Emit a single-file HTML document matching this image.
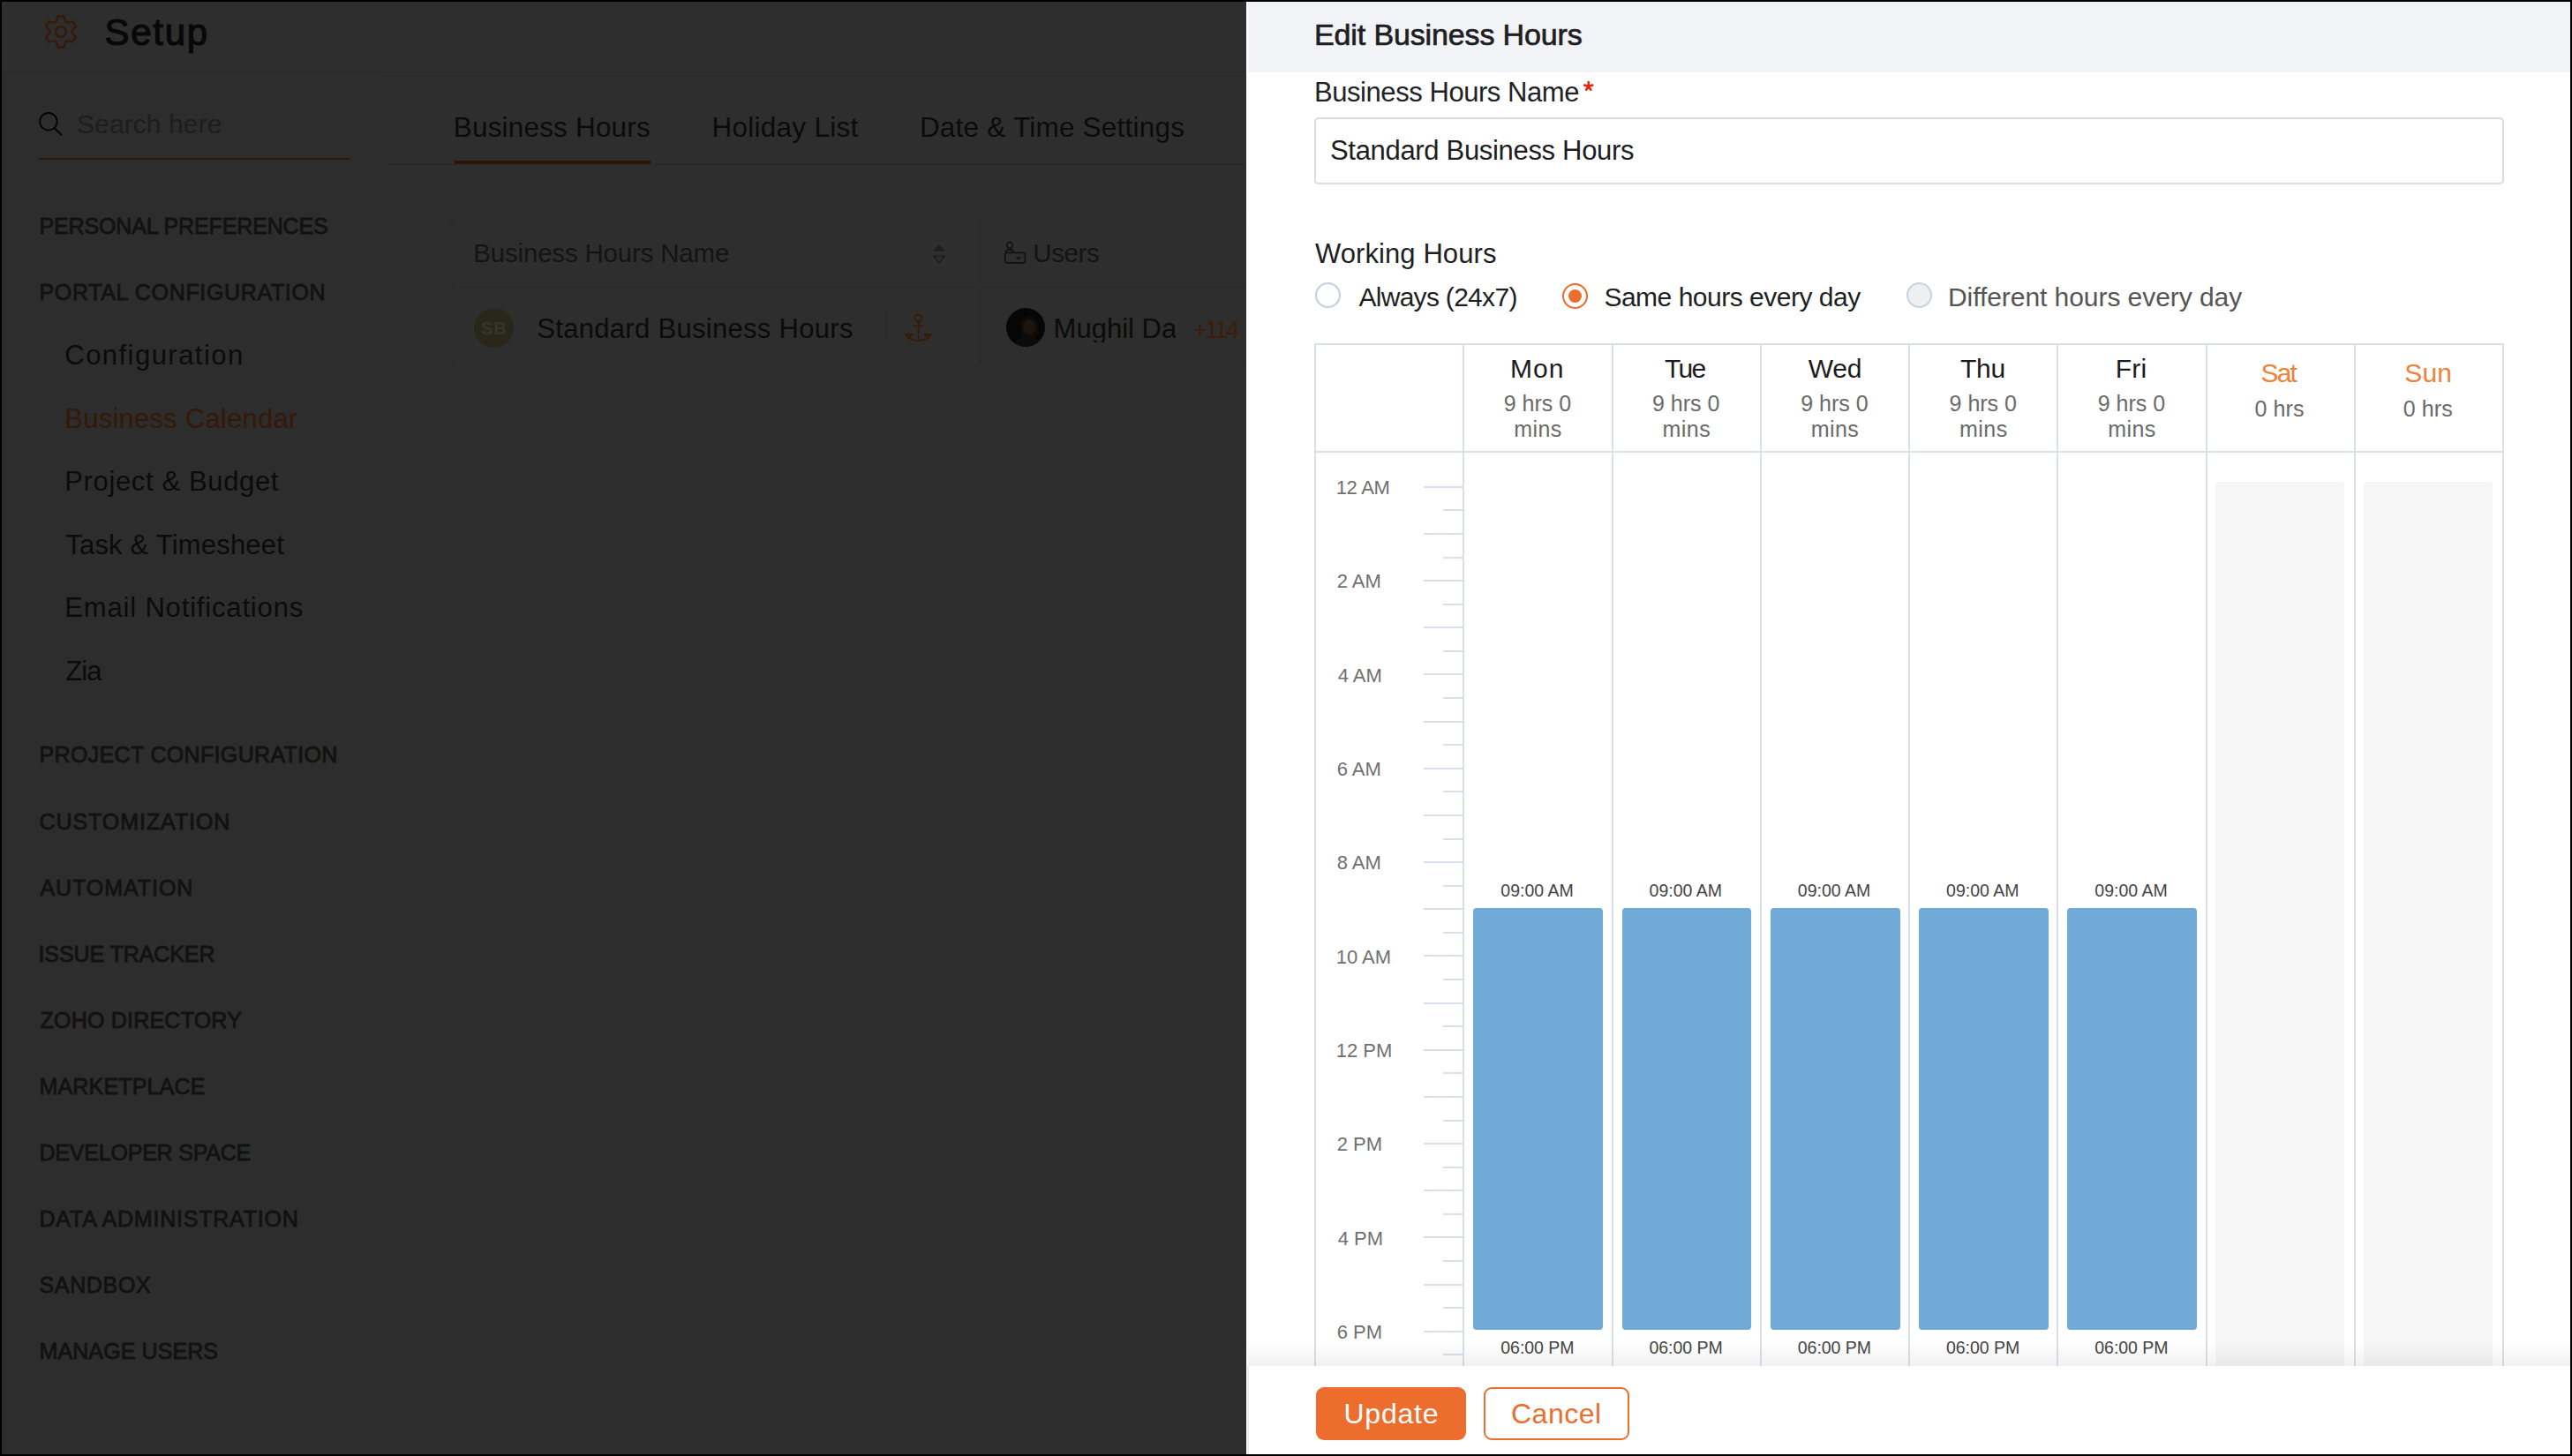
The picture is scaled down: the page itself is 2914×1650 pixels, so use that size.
<!DOCTYPE html>
<html><head><meta charset="utf-8"><title>Edit Business Hours</title>
<style>
html,body{margin:0;padding:0;}
body{width:2914px;height:1650px;background:#000;position:relative;overflow:hidden;font-family:"Liberation Sans", sans-serif;}
.t{position:absolute;white-space:nowrap;}
.r{position:absolute;}
</style></head><body>
<div class="r" style="left:2.0px;top:2.0px;width:1410.0px;height:1646.0px;background:#2e2e2e;"></div>
<div class="r" style="left:2.0px;top:82.0px;width:437.0px;height:1566.0px;background:#2d2d2d;"></div>
<div class="r" style="left:2.0px;top:81.0px;width:1410.0px;height:1.0px;background:#2a2a2a;"></div>
<svg class="r" style="left:46.6px;top:13.6px" width="44" height="44" viewBox="0 0 24 24"><path fill="none" stroke="#371806" stroke-width="1.25" stroke-linejoin="round" d="M9.19 5.70 L10.14 2.43 L13.86 2.43 L14.81 5.70 L16.06 6.42 L19.36 5.60 L21.22 8.83 L18.86 11.28 L18.86 12.72 L21.22 15.17 L19.36 18.40 L16.06 17.58 L14.81 18.30 L13.86 21.57 L10.14 21.57 L9.19 18.30 L7.94 17.58 L4.64 18.40 L2.78 15.17 L5.14 12.72 L5.14 11.28 L2.78 8.83 L4.64 5.60 L7.94 6.42Z"/><circle cx="12" cy="12" r="3.2" fill="none" stroke="#371806" stroke-width="1.25"/></svg>
<div class="t" style="left:118.4px;top:16.2px;font-size:42px;line-height:42px;font-weight:400;color:#080808;letter-spacing:1.75px;-webkit-text-stroke:1.2px #080808;">Setup</div>
<svg class="r" style="left:40px;top:124px" width="36" height="36" viewBox="0 0 36 36"><circle cx="14.9" cy="13.8" r="9.8" fill="none" stroke="#040404" stroke-width="1.8"/><path d="M22 21.5l8 7.8" stroke="#040404" stroke-width="1.9" fill="none"/></svg>
<div class="t" style="left:87.0px;top:126.4px;font-size:30px;line-height:30px;font-weight:400;color:#1d1d1d;letter-spacing:0.10px;">Search here</div>
<div class="r" style="left:44.0px;top:179.0px;width:352.0px;height:2.0px;background:#2f1608;"></div>
<div class="t" style="left:44.5px;top:244.0px;font-size:25px;line-height:25px;font-weight:400;color:#121212;letter-spacing:-0.13px;-webkit-text-stroke:0.85px #121212;">PERSONAL PREFERENCES</div>
<div class="t" style="left:44.5px;top:319.3px;font-size:25px;line-height:25px;font-weight:400;color:#121212;letter-spacing:0.66px;-webkit-text-stroke:0.85px #121212;">PORTAL CONFIGURATION</div>
<div class="t" style="left:73.3px;top:387.4px;font-size:31px;line-height:31px;font-weight:400;color:#0b0b0b;letter-spacing:1.46px;">Configuration</div>
<div class="t" style="left:73.3px;top:458.8px;font-size:31px;line-height:31px;font-weight:400;color:#351807;letter-spacing:0.23px;">Business Calendar</div>
<div class="t" style="left:73.3px;top:530.3px;font-size:31px;line-height:31px;font-weight:400;color:#0b0b0b;letter-spacing:0.63px;">Project &amp; Budget</div>
<div class="t" style="left:74.3px;top:601.7px;font-size:31px;line-height:31px;font-weight:400;color:#0b0b0b;letter-spacing:0.19px;">Task &amp; Timesheet</div>
<div class="t" style="left:73.3px;top:673.2px;font-size:31px;line-height:31px;font-weight:400;color:#0b0b0b;letter-spacing:0.83px;">Email Notifications</div>
<div class="t" style="left:74.3px;top:744.6px;font-size:31px;line-height:31px;font-weight:400;color:#0b0b0b;letter-spacing:-0.90px;">Zia</div>
<div class="t" style="left:44.5px;top:843.4px;font-size:25px;line-height:25px;font-weight:400;color:#121212;letter-spacing:0.34px;-webkit-text-stroke:0.85px #121212;">PROJECT CONFIGURATION</div>
<div class="t" style="left:44.5px;top:918.5px;font-size:25px;line-height:25px;font-weight:400;color:#121212;letter-spacing:0.94px;-webkit-text-stroke:0.85px #121212;">CUSTOMIZATION</div>
<div class="t" style="left:45.5px;top:993.6px;font-size:25px;line-height:25px;font-weight:400;color:#121212;letter-spacing:0.94px;-webkit-text-stroke:0.85px #121212;">AUTOMATION</div>
<div class="t" style="left:43.5px;top:1068.7px;font-size:25px;line-height:25px;font-weight:400;color:#121212;letter-spacing:-0.08px;-webkit-text-stroke:0.85px #121212;">ISSUE TRACKER</div>
<div class="t" style="left:45.5px;top:1143.8px;font-size:25px;line-height:25px;font-weight:400;color:#121212;letter-spacing:0.22px;-webkit-text-stroke:0.85px #121212;">ZOHO DIRECTORY</div>
<div class="t" style="left:44.5px;top:1218.9px;font-size:25px;line-height:25px;font-weight:400;color:#121212;letter-spacing:0.17px;-webkit-text-stroke:0.85px #121212;">MARKETPLACE</div>
<div class="t" style="left:44.5px;top:1294.0px;font-size:25px;line-height:25px;font-weight:400;color:#121212;letter-spacing:-0.21px;-webkit-text-stroke:0.85px #121212;">DEVELOPER SPACE</div>
<div class="t" style="left:44.5px;top:1369.1px;font-size:25px;line-height:25px;font-weight:400;color:#121212;letter-spacing:0.78px;-webkit-text-stroke:0.85px #121212;">DATA ADMINISTRATION</div>
<div class="t" style="left:44.5px;top:1444.2px;font-size:25px;line-height:25px;font-weight:400;color:#121212;letter-spacing:0.65px;-webkit-text-stroke:0.85px #121212;">SANDBOX</div>
<div class="t" style="left:44.5px;top:1519.3px;font-size:25px;line-height:25px;font-weight:400;color:#121212;letter-spacing:0.10px;-webkit-text-stroke:0.85px #121212;">MANAGE USERS</div>
<div class="r" style="left:440.0px;top:185.0px;width:972.0px;height:2.0px;background:#2a2a2a;"></div>
<div class="t" style="left:513.8px;top:129.4px;font-size:31.5px;line-height:31.5px;font-weight:400;color:#0b0b0b;letter-spacing:0.18px;">Business Hours</div>
<div class="r" style="left:515.0px;top:182.0px;width:222.0px;height:4.0px;background:#2e1405;"></div>
<div class="t" style="left:806.4px;top:129.4px;font-size:31.5px;line-height:31.5px;font-weight:400;color:#0b0b0b;letter-spacing:0.28px;">Holiday List</div>
<div class="t" style="left:1041.9px;top:129.4px;font-size:31.5px;line-height:31.5px;font-weight:400;color:#0b0b0b;letter-spacing:0.22px;">Date &amp; Time Settings</div>
<div class="r" style="left:511.0px;top:247.0px;width:929.0px;height:168.0px;background:#2e2e2e;border:2px solid #2a2b2c;border-radius:8px;box-sizing:border-box;"></div>
<div class="r" style="left:513.0px;top:324.0px;width:899.0px;height:2.0px;background:#2a2b2c;"></div>
<div class="r" style="left:1109.0px;top:249.0px;width:2.0px;height:164.0px;background:#2a2b2c;"></div>
<div class="t" style="left:536.3px;top:272.2px;font-size:29.5px;line-height:29.5px;font-weight:400;color:#141414;letter-spacing:-0.19px;">Business Hours Name</div>
<svg class="r" style="left:1054px;top:274px" width="20" height="28" viewBox="0 0 20 28"><path d="M10 3l6.5 8h-13z" fill="#1e1e1e"/><path d="M3.5 16h13L10 24z" fill="none" stroke="#1e1e1e" stroke-width="1.6" stroke-linejoin="round"/></svg>
<svg class="r" style="left:1130px;top:270px" width="36" height="34" viewBox="0 0 36 34"><ellipse cx="14" cy="8" rx="3.2" ry="3.6" fill="none" stroke="#111" stroke-width="1.6"/><path d="M9.3 16.2a4.8 4.2 0 0 1 9.4 0" fill="none" stroke="#111" stroke-width="1.6"/><rect x="8.8" y="16.4" width="22.6" height="11.4" rx="2.2" fill="none" stroke="#111" stroke-width="1.7"/><path d="M21.4 20.8l2.5 2.5 2.5-2.5" fill="none" stroke="#111" stroke-width="1.6"/></svg>
<div class="t" style="left:1170.3px;top:272.2px;font-size:29.5px;line-height:29.5px;font-weight:400;color:#141414;letter-spacing:-0.40px;">Users</div>
<div class="r" style="left:537px;top:348.5px;width:45px;height:45px;border-radius:50%;background:#29271a;"></div>
<div class="t" style="left:545.0px;top:362.0px;font-size:20px;line-height:20px;font-weight:700;color:#36352c;letter-spacing:1.00px;">SB</div>
<div class="t" style="left:608.3px;top:357.0px;font-size:31px;line-height:31px;font-weight:400;color:#0b0b0b;letter-spacing:0.30px;">Standard Business Hours</div>
<div class="r" style="left:1003.0px;top:351.0px;width:2.0px;height:40.0px;background:#2a2b2c;"></div>
<svg class="r" style="left:1020px;top:350px" width="42" height="42" viewBox="0 0 42 42"><circle cx="20.4" cy="10.5" r="3.9" fill="none" stroke="#381906" stroke-width="1.7"/><path d="M20.4 14.4v21.4M15.2 19.4h10.6M6.2 29.2c2.6 4.6 8 6.8 14.2 6.8s11.6-2.2 14.2-6.8" fill="none" stroke="#381906" stroke-width="1.7"/><path d="M5.6 28.9h8.2l-4 3.6zM35.2 28.9h-8.2l4 3.6z" fill="none" stroke="#381906" stroke-width="1.6" stroke-linejoin="round"/></svg>
<div class="r" style="left:1140px;top:348.5px;width:44px;height:44px;border-radius:50%;background:#060606;overflow:hidden"><div style="position:absolute;left:17px;top:9px;width:19px;height:28px;border-radius:45%;background:#0e0c0a"></div><div style="position:absolute;left:19px;top:13px;width:14px;height:17px;border-radius:50%;background:#1c140e"></div><div style="position:absolute;left:10px;top:33px;width:30px;height:16px;border-radius:50%;background:#0b0b0b"></div></div>
<div class="t" style="left:1193.6px;top:357.0px;font-size:31px;line-height:31px;font-weight:400;color:#0b0b0b;width:138.4px;overflow:hidden;">Mughil Das</div>
<div class="t" style="left:1351.6px;top:361.0px;font-size:27px;line-height:27px;font-weight:400;color:#3d1c08;letter-spacing:-2.13px;">+114</div>
<div class="r" style="left:1412.0px;top:2.0px;width:1500.0px;height:1646.0px;background:#ffffff;"></div>
<div class="r" style="left:1414.0px;top:2.0px;width:1498.0px;height:80.0px;background:#f2f3f7;"></div>
<div class="t" style="left:1489.0px;top:21.5px;font-size:34px;line-height:34px;font-weight:400;color:#1e1f22;letter-spacing:-0.13px;-webkit-text-stroke:0.7px #1e1f22;">Edit Business Hours</div>
<div class="t" style="left:1489.0px;top:89.0px;font-size:31px;line-height:31px;font-weight:400;color:#212226;letter-spacing:-0.44px;">Business Hours Name</div>
<svg class="r" style="left:1790px;top:88.4px" width="20" height="20" viewBox="0 0 20 20"><g transform="translate(9.7 9.8)" stroke="#e8260f" stroke-width="2.5" stroke-linecap="round" fill="none"><path d="M0 0V-4.8M0 0L4.6-1.3M0 0L2.6 4M0 0L-2.6 4M0 0L-4.6-1.3"/></g></svg>
<div class="r" style="left:1489px;top:133px;width:1348px;height:76px;border:2px solid #d6dde8;border-radius:5px;box-sizing:border-box;background:#fff"></div>
<div class="t" style="left:1507.0px;top:155.2px;font-size:31px;line-height:31px;font-weight:400;color:#1d1d1f;letter-spacing:-0.32px;">Standard Business Hours</div>
<div class="t" style="left:1490.0px;top:272.0px;font-size:31px;line-height:31px;font-weight:400;color:#1e1f22;letter-spacing:0.08px;">Working Hours</div>
<div class="r" style="left:1490.0px;top:320.2px;width:29px;height:29px;border:2.5px solid #c4cfdd;border-radius:50%;box-sizing:border-box;background:#fff"></div>
<div class="t" style="left:1539.4px;top:321.6px;font-size:30px;line-height:30px;font-weight:400;color:#1e1f22;letter-spacing:-0.70px;">Always (24x7)</div>
<div class="r" style="left:1769.5px;top:320.5px;width:29px;height:29px;border:2.5px solid #ec6d2d;border-radius:50%;box-sizing:border-box;background:#fff"></div>
<div class="r" style="left:1776.5px;top:327.5px;width:15px;height:15px;border-radius:50%;background:#ec6d2d"></div>
<div class="t" style="left:1817.4px;top:321.6px;font-size:30px;line-height:30px;font-weight:400;color:#1e1f22;letter-spacing:-0.49px;">Same hours every day</div>
<div class="r" style="left:2159.7px;top:320.2px;width:29px;height:29px;border:2.5px solid #c8d3e0;border-radius:50%;box-sizing:border-box;background:#efefef"></div>
<div class="t" style="left:2207.0px;top:321.6px;font-size:30px;line-height:30px;font-weight:400;color:#555555;letter-spacing:-0.06px;">Different hours every day</div>
<div class="r" style="left:1489.0px;top:389.0px;width:1348.0px;height:2.0px;background:#d9e0eb;"></div>
<div class="r" style="left:1489.0px;top:389.0px;width:2.0px;height:1211.0px;background:#d9e0eb;"></div>
<div class="r" style="left:1657.2px;top:389.0px;width:2.0px;height:1211.0px;background:#d9e0eb;"></div>
<div class="r" style="left:1825.5px;top:389.0px;width:2.0px;height:1211.0px;background:#d9e0eb;"></div>
<div class="r" style="left:1993.8px;top:389.0px;width:2.0px;height:1211.0px;background:#d9e0eb;"></div>
<div class="r" style="left:2162.0px;top:389.0px;width:2.0px;height:1211.0px;background:#d9e0eb;"></div>
<div class="r" style="left:2330.2px;top:389.0px;width:2.0px;height:1211.0px;background:#d9e0eb;"></div>
<div class="r" style="left:2498.5px;top:389.0px;width:2.0px;height:1211.0px;background:#d9e0eb;"></div>
<div class="r" style="left:2666.8px;top:389.0px;width:2.0px;height:1211.0px;background:#d9e0eb;"></div>
<div class="r" style="left:2835.0px;top:389.0px;width:2.0px;height:1211.0px;background:#d9e0eb;"></div>
<div class="r" style="left:1489.0px;top:511.0px;width:1348.0px;height:2.0px;background:#d9e0eb;"></div>
<div class="t" style="left:1710.9px;top:403.3px;font-size:30px;line-height:30px;font-weight:400;color:#1c1c1e;letter-spacing:1.10px;">Mon</div>
<div class="t" style="left:1703.8px;top:444.7px;font-size:25px;line-height:25px;font-weight:400;color:#6a6a6a;letter-spacing:-0.02px;">9 hrs 0</div>
<div class="t" style="left:1715.2px;top:474.0px;font-size:25px;line-height:25px;font-weight:400;color:#6a6a6a;letter-spacing:0.46px;">mins</div>
<div class="r" style="left:1669.2px;top:1029.0px;width:146.8px;height:478.0px;background:#70aad7;border-radius:4px;"></div>
<div class="t" style="left:1700.3px;top:999.9px;font-size:19.5px;line-height:19.5px;font-weight:400;color:#454545;letter-spacing:0.01px;">09:00 AM</div>
<div class="t" style="left:1700.3px;top:1517.8px;font-size:19.5px;line-height:19.5px;font-weight:400;color:#454545;letter-spacing:-0.04px;">06:00 PM</div>
<div class="t" style="left:1886.0px;top:403.3px;font-size:30px;line-height:30px;font-weight:400;color:#1c1c1e;letter-spacing:-1.75px;">Tue</div>
<div class="t" style="left:1872.0px;top:444.7px;font-size:25px;line-height:25px;font-weight:400;color:#6a6a6a;letter-spacing:-0.02px;">9 hrs 0</div>
<div class="t" style="left:1883.5px;top:474.0px;font-size:25px;line-height:25px;font-weight:400;color:#6a6a6a;letter-spacing:0.46px;">mins</div>
<div class="r" style="left:1837.5px;top:1029.0px;width:146.8px;height:478.0px;background:#70aad7;border-radius:4px;"></div>
<div class="t" style="left:1868.6px;top:999.9px;font-size:19.5px;line-height:19.5px;font-weight:400;color:#454545;letter-spacing:0.01px;">09:00 AM</div>
<div class="t" style="left:1868.5px;top:1517.8px;font-size:19.5px;line-height:19.5px;font-weight:400;color:#454545;letter-spacing:-0.04px;">06:00 PM</div>
<div class="t" style="left:2048.7px;top:403.3px;font-size:30px;line-height:30px;font-weight:400;color:#1c1c1e;letter-spacing:-0.20px;">Wed</div>
<div class="t" style="left:2040.3px;top:444.7px;font-size:25px;line-height:25px;font-weight:400;color:#6a6a6a;letter-spacing:-0.02px;">9 hrs 0</div>
<div class="t" style="left:2051.7px;top:474.0px;font-size:25px;line-height:25px;font-weight:400;color:#6a6a6a;letter-spacing:0.46px;">mins</div>
<div class="r" style="left:2005.8px;top:1029.0px;width:146.8px;height:478.0px;background:#70aad7;border-radius:4px;"></div>
<div class="t" style="left:2036.8px;top:999.9px;font-size:19.5px;line-height:19.5px;font-weight:400;color:#454545;letter-spacing:0.01px;">09:00 AM</div>
<div class="t" style="left:2036.8px;top:1517.8px;font-size:19.5px;line-height:19.5px;font-weight:400;color:#454545;letter-spacing:-0.04px;">06:00 PM</div>
<div class="t" style="left:2221.0px;top:403.3px;font-size:30px;line-height:30px;font-weight:400;color:#1c1c1e;letter-spacing:-0.25px;">Thu</div>
<div class="t" style="left:2208.6px;top:444.7px;font-size:25px;line-height:25px;font-weight:400;color:#6a6a6a;letter-spacing:-0.02px;">9 hrs 0</div>
<div class="t" style="left:2220.0px;top:474.0px;font-size:25px;line-height:25px;font-weight:400;color:#6a6a6a;letter-spacing:0.46px;">mins</div>
<div class="r" style="left:2174.0px;top:1029.0px;width:146.8px;height:478.0px;background:#70aad7;border-radius:4px;"></div>
<div class="t" style="left:2205.1px;top:999.9px;font-size:19.5px;line-height:19.5px;font-weight:400;color:#454545;letter-spacing:0.01px;">09:00 AM</div>
<div class="t" style="left:2205.0px;top:1517.8px;font-size:19.5px;line-height:19.5px;font-weight:400;color:#454545;letter-spacing:-0.04px;">06:00 PM</div>
<div class="t" style="left:2396.7px;top:403.3px;font-size:30px;line-height:30px;font-weight:400;color:#1c1c1e;letter-spacing:0.30px;">Fri</div>
<div class="t" style="left:2376.8px;top:444.7px;font-size:25px;line-height:25px;font-weight:400;color:#6a6a6a;letter-spacing:-0.02px;">9 hrs 0</div>
<div class="t" style="left:2388.2px;top:474.0px;font-size:25px;line-height:25px;font-weight:400;color:#6a6a6a;letter-spacing:0.46px;">mins</div>
<div class="r" style="left:2342.2px;top:1029.0px;width:146.8px;height:478.0px;background:#70aad7;border-radius:4px;"></div>
<div class="t" style="left:2373.3px;top:999.9px;font-size:19.5px;line-height:19.5px;font-weight:400;color:#454545;letter-spacing:0.01px;">09:00 AM</div>
<div class="t" style="left:2373.3px;top:1517.8px;font-size:19.5px;line-height:19.5px;font-weight:400;color:#454545;letter-spacing:-0.04px;">06:00 PM</div>
<div class="t" style="left:2561.5px;top:408.3px;font-size:30px;line-height:30px;font-weight:400;color:#ef8237;letter-spacing:-1.85px;">Sat</div>
<div class="t" style="left:2554.4px;top:451.0px;font-size:25px;line-height:25px;font-weight:400;color:#6a6a6a;letter-spacing:0.12px;">0 hrs</div>
<div class="r" style="left:2509.5px;top:545.5px;width:146.5px;height:1054.5px;background:#f6f6f6;border-radius:4px;"></div>
<div class="t" style="left:2724.3px;top:408.3px;font-size:30px;line-height:30px;font-weight:400;color:#ef8237;letter-spacing:0.10px;">Sun</div>
<div class="t" style="left:2722.7px;top:451.0px;font-size:25px;line-height:25px;font-weight:400;color:#6a6a6a;letter-spacing:0.12px;">0 hrs</div>
<div class="r" style="left:2677.8px;top:545.5px;width:146.5px;height:1054.5px;background:#f6f6f6;border-radius:4px;"></div>
<div class="r" style="left:1613.0px;top:550.7px;width:44.0px;height:2.0px;background:#d9e0eb;"></div>
<div class="r" style="left:1635.0px;top:577.3px;width:22.0px;height:2.0px;background:#d9e0eb;"></div>
<div class="t" style="left:1513.7px;top:542.0px;font-size:22px;line-height:22px;font-weight:400;color:#707070;letter-spacing:-0.30px;">12 AM</div>
<div class="r" style="left:1613.0px;top:603.9px;width:44.0px;height:2.0px;background:#d9e0eb;"></div>
<div class="r" style="left:1635.0px;top:630.5px;width:22.0px;height:2.0px;background:#d9e0eb;"></div>
<div class="r" style="left:1613.0px;top:657.0px;width:44.0px;height:2.0px;background:#d9e0eb;"></div>
<div class="r" style="left:1635.0px;top:683.6px;width:22.0px;height:2.0px;background:#d9e0eb;"></div>
<div class="t" style="left:1514.7px;top:648.3px;font-size:22px;line-height:22px;font-weight:400;color:#707070;">2 AM</div>
<div class="r" style="left:1613.0px;top:710.2px;width:44.0px;height:2.0px;background:#d9e0eb;"></div>
<div class="r" style="left:1635.0px;top:736.8px;width:22.0px;height:2.0px;background:#d9e0eb;"></div>
<div class="r" style="left:1613.0px;top:763.4px;width:44.0px;height:2.0px;background:#d9e0eb;"></div>
<div class="r" style="left:1635.0px;top:790.0px;width:22.0px;height:2.0px;background:#d9e0eb;"></div>
<div class="t" style="left:1515.7px;top:754.7px;font-size:22px;line-height:22px;font-weight:400;color:#707070;">4 AM</div>
<div class="r" style="left:1613.0px;top:816.6px;width:44.0px;height:2.0px;background:#d9e0eb;"></div>
<div class="r" style="left:1635.0px;top:843.1px;width:22.0px;height:2.0px;background:#d9e0eb;"></div>
<div class="r" style="left:1613.0px;top:869.7px;width:44.0px;height:2.0px;background:#d9e0eb;"></div>
<div class="r" style="left:1635.0px;top:896.3px;width:22.0px;height:2.0px;background:#d9e0eb;"></div>
<div class="t" style="left:1514.7px;top:861.0px;font-size:22px;line-height:22px;font-weight:400;color:#707070;">6 AM</div>
<div class="r" style="left:1613.0px;top:922.9px;width:44.0px;height:2.0px;background:#d9e0eb;"></div>
<div class="r" style="left:1635.0px;top:949.5px;width:22.0px;height:2.0px;background:#d9e0eb;"></div>
<div class="r" style="left:1613.0px;top:976.1px;width:44.0px;height:2.0px;background:#d9e0eb;"></div>
<div class="r" style="left:1635.0px;top:1002.6px;width:22.0px;height:2.0px;background:#d9e0eb;"></div>
<div class="t" style="left:1514.7px;top:967.4px;font-size:22px;line-height:22px;font-weight:400;color:#707070;">8 AM</div>
<div class="r" style="left:1613.0px;top:1029.2px;width:44.0px;height:2.0px;background:#d9e0eb;"></div>
<div class="r" style="left:1635.0px;top:1055.8px;width:22.0px;height:2.0px;background:#d9e0eb;"></div>
<div class="r" style="left:1613.0px;top:1082.4px;width:44.0px;height:2.0px;background:#d9e0eb;"></div>
<div class="r" style="left:1635.0px;top:1109.0px;width:22.0px;height:2.0px;background:#d9e0eb;"></div>
<div class="t" style="left:1513.7px;top:1073.7px;font-size:22px;line-height:22px;font-weight:400;color:#707070;">10 AM</div>
<div class="r" style="left:1613.0px;top:1135.6px;width:44.0px;height:2.0px;background:#d9e0eb;"></div>
<div class="r" style="left:1635.0px;top:1162.2px;width:22.0px;height:2.0px;background:#d9e0eb;"></div>
<div class="r" style="left:1613.0px;top:1188.7px;width:44.0px;height:2.0px;background:#d9e0eb;"></div>
<div class="r" style="left:1635.0px;top:1215.3px;width:22.0px;height:2.0px;background:#d9e0eb;"></div>
<div class="t" style="left:1513.7px;top:1180.0px;font-size:22px;line-height:22px;font-weight:400;color:#707070;">12 PM</div>
<div class="r" style="left:1613.0px;top:1241.9px;width:44.0px;height:2.0px;background:#d9e0eb;"></div>
<div class="r" style="left:1635.0px;top:1268.5px;width:22.0px;height:2.0px;background:#d9e0eb;"></div>
<div class="r" style="left:1613.0px;top:1295.1px;width:44.0px;height:2.0px;background:#d9e0eb;"></div>
<div class="r" style="left:1635.0px;top:1321.7px;width:22.0px;height:2.0px;background:#d9e0eb;"></div>
<div class="t" style="left:1514.7px;top:1286.4px;font-size:22px;line-height:22px;font-weight:400;color:#707070;">2 PM</div>
<div class="r" style="left:1613.0px;top:1348.2px;width:44.0px;height:2.0px;background:#d9e0eb;"></div>
<div class="r" style="left:1635.0px;top:1374.8px;width:22.0px;height:2.0px;background:#d9e0eb;"></div>
<div class="r" style="left:1613.0px;top:1401.4px;width:44.0px;height:2.0px;background:#d9e0eb;"></div>
<div class="r" style="left:1635.0px;top:1428.0px;width:22.0px;height:2.0px;background:#d9e0eb;"></div>
<div class="t" style="left:1515.7px;top:1392.7px;font-size:22px;line-height:22px;font-weight:400;color:#707070;">4 PM</div>
<div class="r" style="left:1613.0px;top:1454.6px;width:44.0px;height:2.0px;background:#d9e0eb;"></div>
<div class="r" style="left:1635.0px;top:1481.2px;width:22.0px;height:2.0px;background:#d9e0eb;"></div>
<div class="r" style="left:1613.0px;top:1507.8px;width:44.0px;height:2.0px;background:#d9e0eb;"></div>
<div class="r" style="left:1635.0px;top:1534.3px;width:22.0px;height:2.0px;background:#d9e0eb;"></div>
<div class="t" style="left:1514.7px;top:1499.1px;font-size:22px;line-height:22px;font-weight:400;color:#707070;">6 PM</div>
<div class="r" style="left:1613.0px;top:1560.9px;width:44.0px;height:2.0px;background:#d9e0eb;"></div>
<div class="r" style="left:1635.0px;top:1587.5px;width:22.0px;height:2.0px;background:#d9e0eb;"></div>
<div class="r" style="left:1613.0px;top:1614.1px;width:44.0px;height:2.0px;background:#d9e0eb;"></div>
<div class="r" style="left:1635.0px;top:1640.7px;width:22.0px;height:2.0px;background:#d9e0eb;"></div>
<div class="r" style="left:1414px;top:1520px;width:1498px;height:28px;background:linear-gradient(to bottom, rgba(0,0,0,0), rgba(0,0,0,0.055));"></div>
<div class="r" style="left:1414.0px;top:1548.0px;width:1498.0px;height:100.0px;background:#ffffff;"></div>
<div class="r" style="left:1413.0px;top:1548.0px;width:2.0px;height:100.0px;background:#eeeeee;"></div>
<div class="r" style="left:1491px;top:1572px;width:170px;height:60px;background:#ec6d2d;border-radius:9px;"></div>
<div class="t" style="left:1522.4px;top:1586.2px;font-size:32px;line-height:32px;font-weight:400;color:#ffffff;letter-spacing:0.80px;">Update</div>
<div class="r" style="left:1681px;top:1572px;width:165px;height:60px;border:2px solid #ec6d2d;border-radius:9px;box-sizing:border-box;background:#fff"></div>
<div class="t" style="left:1712.0px;top:1586.0px;font-size:32px;line-height:32px;font-weight:400;color:#ec6d2d;letter-spacing:0.50px;">Cancel</div>
</body></html>
